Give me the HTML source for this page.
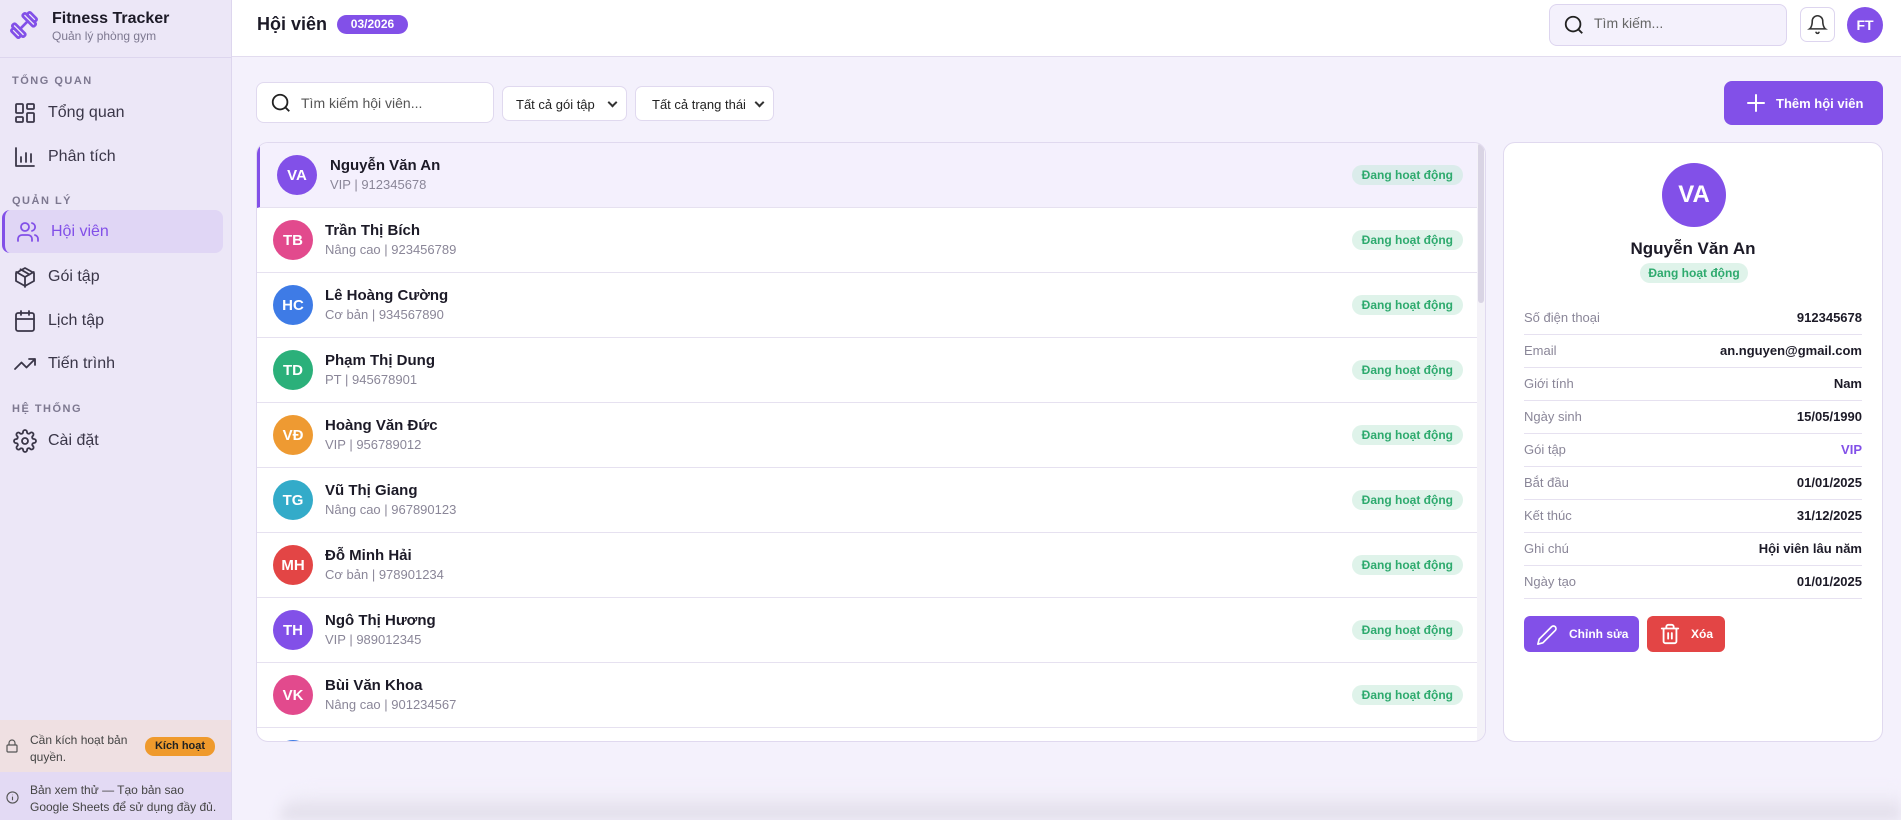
<!DOCTYPE html>
<html><head><meta charset="utf-8"><style>
*{box-sizing:border-box;margin:0;padding:0}
body{width:1901px;height:820px;overflow:hidden;background:#f4f1fc;font-family:"Liberation Sans","Noto Sans CJK SC",sans-serif;color:#1c1a27;position:relative}
.side{position:absolute;left:0;top:0;width:232px;height:820px;background:#ece7f7;border-right:1px solid #ddd6ee}
.abs{position:absolute}
.sec{position:absolute;left:12px;font-size:11px;letter-spacing:1.5px;color:#7d7890;font-weight:bold}
.nav{position:absolute;left:13px;display:flex;align-items:center;font-size:16px;color:#3a3648}
.nav svg{width:24px;height:24px;margin-right:11px;fill:none;stroke:#3a3648;stroke-width:1.8;stroke-linecap:round;stroke-linejoin:round}
.hdr{position:absolute;left:232px;top:0;right:0;height:57px;background:#fff;border-bottom:1px solid #e2dcef}
.card{position:absolute;background:#fff;border:1px solid #e0d9ef;border-radius:12px;overflow:hidden}
.row{position:absolute;left:0;right:8px;height:65px;border-bottom:1px solid #e6e1f0}
.av{position:absolute;left:16px;top:12px;width:40px;height:40px;border-radius:50%;color:#fff;font-weight:bold;font-size:15px;display:flex;align-items:center;justify-content:center}
.nm{position:absolute;left:68px;top:14px;font-size:15px;font-weight:bold;color:#1c1a27}
.sb{position:absolute;left:68px;top:34px;font-size:13px;color:#8a8698}
.bd{position:absolute;right:14px;top:22px;height:20px;padding:0 10px;border-radius:10px;background:#dff3ea;color:#2eaa6e;font-size:12px;font-weight:bold;line-height:20px}
.dr{position:absolute;left:20px;right:20px;height:33px;border-bottom:1px solid #e6e1f0;font-size:13px}
.dr .l{position:absolute;left:0;top:8px;color:#8a8698}
.dr .v{position:absolute;right:0;top:8px;font-weight:bold;color:#1c1a27}
.sel{position:absolute;top:86px;height:35px;background:#fff;border:1px solid #e0d9ef;border-radius:7px;font-size:13px;padding:10px 0 0 14px;color:#222}
.sel:after{content:"";position:absolute;right:10px;top:12px;width:5px;height:5px;border-right:2px solid #333;border-bottom:2px solid #333;transform:rotate(45deg)}
</style></head><body>
<div class="side">
  <svg class="abs" style="left:8px;top:9px" width="32" height="32" viewBox="0 0 24 24" fill="none" stroke="#8250e8" stroke-width="2" stroke-linecap="round" stroke-linejoin="round"><g transform="rotate(-45 12 12)"><rect x="2" y="8" width="3" height="8" rx="1"/><rect x="5" y="6" width="3" height="12" rx="1"/><rect x="16" y="6" width="3" height="12" rx="1"/><rect x="19" y="8" width="3" height="8" rx="1"/><path d="M8 12h8"/></g></svg>
  <div class="abs" style="left:52px;top:10px;font-size:16px;font-weight:bold">Fitness Tracker</div>
  <div class="abs" style="left:52px;top:29px;font-size:12px;color:#7d7890">Quản lý phòng gym</div>
  <div class="abs" style="left:0;top:57px;width:232px;border-top:1px solid #ddd6ee"></div>
  <div class="sec" style="top:75px">TỔNG QUAN</div>
  <div class="nav" style="top:101px"><svg viewBox="0 0 24 24"><rect x="3" y="3" width="7" height="9" rx="1"/><rect x="14" y="3" width="7" height="5" rx="1"/><rect x="14" y="12" width="7" height="9" rx="1"/><rect x="3" y="16" width="7" height="5" rx="1"/></svg>Tổng quan</div>
  <div class="nav" style="top:145px"><svg viewBox="0 0 24 24"><path d="M3 3v18h18M8 17v-5M13 17V8M18 17v-8"/></svg>Phân tích</div>
  <div class="sec" style="top:195px">QUẢN LÝ</div>
  <div class="abs" style="left:2px;top:210px;width:221px;height:43px;background:#e0d6f5;border-radius:8px;border-left:3px solid #8250e8"></div>
  <div class="nav" style="top:220px;left:16px;color:#8250e8"><svg viewBox="0 0 24 24" style="stroke:#8250e8"><circle cx="9" cy="7" r="4"/><path d="M2 21v-2a4 4 0 014-4h6a4 4 0 014 4v2M16 3.1a4 4 0 010 7.8M22 21v-2a4 4 0 00-3-3.9"/></svg>Hội viên</div>
  <div class="nav" style="top:265px"><svg viewBox="0 0 24 24"><path d="M21 16V8l-9-5-9 5v8l9 5 9-5z"/><path d="M3.3 7L12 12l8.7-5M12 22V12M7.5 4.3l9 5.2"/></svg>Gói tập</div>
  <div class="nav" style="top:309px"><svg viewBox="0 0 24 24"><rect x="3" y="4" width="18" height="18" rx="2"/><path d="M16 2v4M8 2v4M3 10h18"/></svg>Lịch tập</div>
  <div class="nav" style="top:352px"><svg viewBox="0 0 24 24"><path d="M22 7l-8.5 8.5-5-5L2 17M16 7h6v6"/></svg>Tiến trình</div>
  <div class="sec" style="top:403px">HỆ THỐNG</div>
  <div class="nav" style="top:429px"><svg viewBox="0 0 24 24"><circle cx="12" cy="12" r="3"/><path d="M19.4 15a1.7 1.7 0 00.3 1.8l.1.1a2 2 0 11-2.8 2.8l-.1-.1a1.7 1.7 0 00-1.8-.3 1.7 1.7 0 00-1 1.5V21a2 2 0 01-4 0v-.1a1.7 1.7 0 00-1.1-1.5 1.7 1.7 0 00-1.8.3l-.1.1a2 2 0 11-2.8-2.8l.1-.1a1.7 1.7 0 00.3-1.8 1.7 1.7 0 00-1.5-1H3a2 2 0 010-4h.1a1.7 1.7 0 001.5-1.1 1.7 1.7 0 00-.3-1.8l-.1-.1a2 2 0 112.8-2.8l.1.1a1.7 1.7 0 001.8.3H9a1.7 1.7 0 001-1.5V3a2 2 0 014 0v.1a1.7 1.7 0 001 1.5 1.7 1.7 0 001.8-.3l.1-.1a2 2 0 112.8 2.8l-.1.1a1.7 1.7 0 00-.3 1.8V9a1.7 1.7 0 001.5 1H21a2 2 0 010 4h-.1a1.7 1.7 0 00-1.5 1z"/></svg>Cài đặt</div>
  <div class="abs" style="left:0;top:720px;width:231px;height:52px;background:#efe0e2"></div>
  <svg class="abs" style="left:6px;top:739px" width="12" height="14" viewBox="0 0 12 14" fill="none" stroke="#555" stroke-width="1.2"><rect x="1" y="6" width="10" height="7" rx="1"/><path d="M3 6V4a3 3 0 016 0v2"/></svg>
  <div class="abs" style="left:30px;top:732px;font-size:12px;color:#444;line-height:17px">Cần kích hoạt bản<br>quyền.</div>
  <div class="abs" style="left:145px;top:737px;width:70px;height:19px;border-radius:9px;background:#ef9a2c;font-size:11px;font-weight:bold;text-align:center;line-height:19px;color:#222">Kích hoạt</div>
  <div class="abs" style="left:0;top:772px;width:231px;height:48px;background:#e3daf4"></div>
  <svg class="abs" style="left:6px;top:791px" width="13" height="13" viewBox="0 0 14 14" fill="none" stroke="#555" stroke-width="1.2"><circle cx="7" cy="7" r="6"/><path d="M7 6v4M7 4v.5"/></svg>
  <div class="abs" style="left:30px;top:782px;font-size:12px;color:#444;line-height:17px">Bản xem thử — Tạo bản sao<br>Google Sheets để sử dụng đầy đủ.</div>
</div>
<div class="hdr">
  <div class="abs" style="left:25px;top:14px;font-size:18px;font-weight:bold">Hội viên</div>
  <div class="abs" style="left:105px;top:15px;width:71px;height:19px;border-radius:10px;background:#8250e8;color:#fff;font-size:12px;font-weight:bold;text-align:center;line-height:19px">03/2026</div>
  <div class="abs" style="left:1317px;top:4px;width:238px;height:42px;border:1px solid #ddd5ef;border-radius:8px;background:#f4f1fc"></div>
  <svg class="abs" style="left:1331px;top:14px" width="22" height="22" viewBox="0 0 24 24" fill="none" stroke="#222" stroke-width="2"><circle cx="11" cy="11" r="8"/><path d="M21 21l-4.3-4.3"/></svg>
  <div class="abs" style="left:1362px;top:15px;font-size:14px;color:#666">Tìm kiếm...</div>
  <div class="abs" style="left:1568px;top:7px;width:35px;height:35px;border:1px solid #ddd5ef;border-radius:7px;background:#fff"></div>
  <svg class="abs" style="left:1575px;top:14px" width="21" height="21" viewBox="0 0 24 24" fill="none" stroke="#333" stroke-width="1.8" stroke-linecap="round"><path d="M6 8a6 6 0 0112 0c0 7 3 9 3 9H3s3-2 3-9M10.3 21a1.9 1.9 0 003.4 0"/></svg>
  <div class="abs" style="left:1615px;top:7px;width:36px;height:36px;border-radius:50%;background:#8250e8;color:#fff;font-weight:bold;font-size:14px;text-align:center;line-height:36px">FT</div>
</div>
<div class="abs" style="left:256px;top:82px;width:238px;height:41px;background:#fff;border:1px solid #e0d9ef;border-radius:8px"></div>
<svg class="abs" style="left:270px;top:92px" width="22" height="22" viewBox="0 0 24 24" fill="none" stroke="#222" stroke-width="2"><circle cx="11" cy="11" r="8"/><path d="M21 21l-4.3-4.3"/></svg>
<div class="abs" style="left:301px;top:95px;font-size:14px;color:#555">Tìm kiếm hội viên...</div>
<div class="sel" style="left:502px;width:125px;padding-left:13px">Tất cả gói tập</div>
<div class="sel" style="left:635px;width:139px;padding-left:16px">Tất cả trạng thái</div>
<div class="abs" style="left:1724px;top:81px;width:159px;height:44px;border-radius:8px;background:#8250e8;color:#fff;font-size:13px;font-weight:bold"><svg class="abs" style="left:23px;top:13px" width="18" height="18" viewBox="0 0 18 18" stroke="#fff" stroke-width="2" stroke-linecap="round"><path d="M9 1v16M1 9h16"/></svg><span style="position:absolute;left:52px;top:15px">Thêm hội viên</span></div>
<div class="card" style="left:256px;top:142px;width:1230px;height:600px">
  <div class="abs" style="right:0;top:0;width:8px;height:600px;background:#f4f2f8"></div>
  <div class="abs" style="right:1px;top:0;width:6px;height:160px;background:#d9d4e4;border-radius:3px"></div>
  <div class="row" style="top:0;background:#f4f0fd;border-left:3px solid #8250e8"><div class="av" style="background:#8250e8;left:17px">VA</div><div class="nm" style="left:70px">Nguyễn Văn An</div><div class="sb" style="left:70px">VIP | 912345678</div><div class="bd" style="background:#dbeceb">Đang hoạt động</div></div>
  <div class="row" style="top:65px"><div class="av" style="background:#e24a8d">TB</div><div class="nm">Trần Thị Bích</div><div class="sb">Nâng cao | 923456789</div><div class="bd">Đang hoạt động</div></div>
  <div class="row" style="top:130px"><div class="av" style="background:#3e7be6">HC</div><div class="nm">Lê Hoàng Cường</div><div class="sb">Cơ bản | 934567890</div><div class="bd">Đang hoạt động</div></div>
  <div class="row" style="top:195px"><div class="av" style="background:#2bb07a">TD</div><div class="nm">Phạm Thị Dung</div><div class="sb">PT | 945678901</div><div class="bd">Đang hoạt động</div></div>
  <div class="row" style="top:260px"><div class="av" style="background:#ee9a32">VĐ</div><div class="nm">Hoàng Văn Đức</div><div class="sb">VIP | 956789012</div><div class="bd">Đang hoạt động</div></div>
  <div class="row" style="top:325px"><div class="av" style="background:#33abc9">TG</div><div class="nm">Vũ Thị Giang</div><div class="sb">Nâng cao | 967890123</div><div class="bd">Đang hoạt động</div></div>
  <div class="row" style="top:390px"><div class="av" style="background:#e34545">MH</div><div class="nm">Đỗ Minh Hải</div><div class="sb">Cơ bản | 978901234</div><div class="bd">Đang hoạt động</div></div>
  <div class="row" style="top:455px"><div class="av" style="background:#8250e8">TH</div><div class="nm">Ngô Thị Hương</div><div class="sb">VIP | 989012345</div><div class="bd">Đang hoạt động</div></div>
  <div class="row" style="top:520px"><div class="av" style="background:#e24a8d">VK</div><div class="nm">Bùi Văn Khoa</div><div class="sb">Nâng cao | 901234567</div><div class="bd">Đang hoạt động</div></div>
  <div class="row" style="top:585px;border:none"><div class="av" style="background:#3e7be6">LA</div></div>
</div>
<div class="card" style="left:1503px;top:142px;width:380px;height:600px">
  <div class="abs" style="left:158px;top:20px;width:64px;height:64px;border-radius:50%;background:#8250e8;color:#fff;font-size:24px;font-weight:bold;text-align:center;line-height:64px">VA</div>
  <div class="abs" style="left:0;width:378px;top:96px;text-align:center;font-size:17px;font-weight:bold">Nguyễn Văn An</div>
  <div class="abs" style="left:136px;top:120px;width:108px;height:20px;border-radius:10px;background:#dff3ea;color:#2eaa6e;font-size:12px;font-weight:bold;text-align:center;line-height:20px">Đang hoạt động</div>
  <div class="dr" style="top:159px"><span class="l">Số điện thoại</span><span class="v">912345678</span></div>
  <div class="dr" style="top:192px"><span class="l">Email</span><span class="v">an.nguyen@gmail.com</span></div>
  <div class="dr" style="top:225px"><span class="l">Giới tính</span><span class="v">Nam</span></div>
  <div class="dr" style="top:258px"><span class="l">Ngày sinh</span><span class="v">15/05/1990</span></div>
  <div class="dr" style="top:291px"><span class="l">Gói tập</span><span class="v" style="color:#8250e8">VIP</span></div>
  <div class="dr" style="top:324px"><span class="l">Bắt đầu</span><span class="v">01/01/2025</span></div>
  <div class="dr" style="top:357px"><span class="l">Kết thúc</span><span class="v">31/12/2025</span></div>
  <div class="dr" style="top:390px"><span class="l">Ghi chú</span><span class="v">Hội viên lâu năm</span></div>
  <div class="dr" style="top:423px"><span class="l">Ngày tạo</span><span class="v">01/01/2025</span></div>
  <div class="abs" style="left:20px;top:473px;width:115px;height:36px;border-radius:6px;background:#8250e8;color:#fff;font-size:12px;font-weight:bold">
    <svg class="abs" style="left:12px;top:8px" width="22" height="22" viewBox="0 0 24 24" fill="none" stroke="#fff" stroke-width="1.8" stroke-linecap="round" stroke-linejoin="round"><path d="M17 3a2.8 2.8 0 014 4L7.5 20.5 2 22l1.5-5.5z"/></svg>
    <span class="abs" style="left:45px;top:11px">Chỉnh sửa</span></div>
  <div class="abs" style="left:143px;top:473px;width:78px;height:36px;border-radius:6px;background:#e34545;color:#fff;font-size:12px;font-weight:bold">
    <svg class="abs" style="left:12px;top:7px" width="22" height="22" viewBox="0 0 24 24" fill="none" stroke="#fff" stroke-width="2" stroke-linecap="round"><path d="M3 6h18M19 6v14a2 2 0 01-2 2H7a2 2 0 01-2-2V6M8 6V4a2 2 0 012-2h4a2 2 0 012 2v2M10 11v6M14 11v6"/></svg>
    <span class="abs" style="left:44px;top:11px">Xóa</span></div>
</div>
<div class="abs" style="left:280px;top:790px;width:1621px;height:30px;background:linear-gradient(#f4f1fc,#dedae6);border-radius:30px 0 0 0;filter:blur(6px)"></div>
</body></html>
